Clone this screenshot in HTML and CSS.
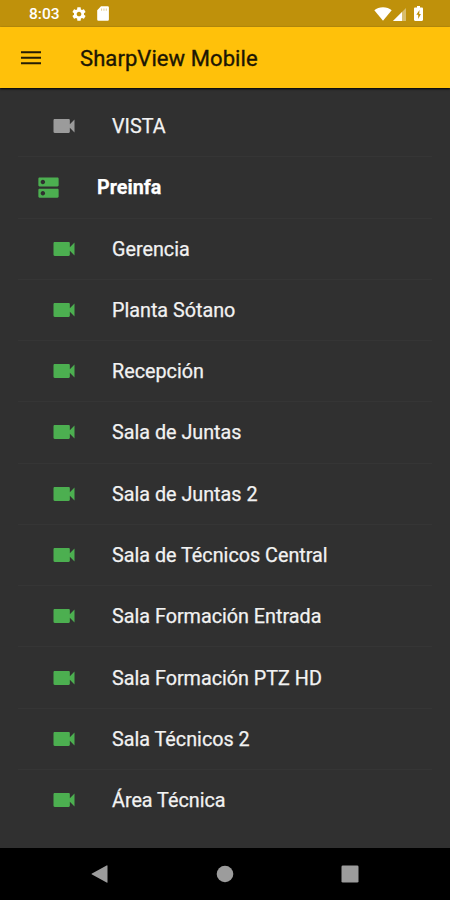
FILE: index.html
```html
<!DOCTYPE html>
<html lang="es">
<head>
<meta charset="utf-8">
<title>SharpView Mobile</title>
<link rel="stylesheet" href="styles.css">
</head>
<body>
<svg class="defs" aria-hidden="true">
  <symbol id="cam" viewBox="0 0 24 24"><path d="M17 10.500V7c0-.55-.45-1-1-1H4c-.55 0-1 .45-1 1v10c0 .55.45 1 1 1h12c.55 0 1-.45 1-1v-3.500l4 4v-11l-4 4z"/></symbol>
</svg>
<div class="screen">
  <header class="status">
    <span class="time">8:03</span>
    <svg class="gear" viewBox="0 0 24 24"><path d="M19.430 12.980c.04-.32.07-.64.07-.98s-.03-.66-.07-.98l2.110-1.650c.19-.15.24-.42.12-.64l-2-3.460c-.12-.22-.39-.3-.61-.22l-2.490 1c-.52-.4-1.080-.73-1.690-.98l-.38-2.650C14.460 2.180 14.250 2 14 2h-4c-.25 0-.46.18-.49.42l-.38 2.650c-.61.25-1.170.59-1.690.98l-2.490-1c-.23-.09-.49 0-.61.22l-2 3.460c-.13.22-.07.49.12.64l2.110 1.650c-.04.32-.07.65-.07.98s.03.66.07.98l-2.110 1.650c-.19.15-.24.42-.12.64l2 3.460c.12.22.39.3.61.22l2.490-1c.52.4 1.080.73 1.690.98l.38 2.650c.03.24.24.42.49.42h4c.25 0 .46-.18.49-.42l.38-2.650c.61-.25 1.170-.59 1.690-.98l2.490 1c.23.09.49 0 .61-.22l2-3.460c.12-.22.07-.49-.12-.64l-2.110-1.650zM12 15.500c-1.930 0-3.500-1.570-3.500-3.500s1.570-3.500 3.500-3.500 3.500 1.570 3.500 3.500-1.570 3.500-3.500 3.500z"/></svg>
    <svg class="sd" viewBox="0 0 12 15"><path d="M4 .3h6.700A1.200 1.200 0 0 1 11.900 1.500v12a1.200 1.200 0 0 1-1.200 1.200H1.400A1.200 1.200 0 0 1 .2 13.500V4.200z"/><path class="notch" d="M4.200 2.400h.9v2.300h-.9zM6.500 2.400h.9v2.300h-.9zM8.800 2.400h.9v2.300h-.9z"/></svg>
    <span class="spacer"></span>
    <svg class="wifi" viewBox="0 0 18 14"><path d="M9 13.800.3 3.200C2.600 1.300 5.600.2 9 .2s6.400 1.100 8.700 3z"/></svg>
    <svg class="signal" viewBox="0 0 13 13"><path class="faint" d="M13 0v13H0z"/><path d="M9 4v9H0z"/></svg>
    <svg class="battery" viewBox="0 0 9 15"><path d="M3 0h3v1.500h1.800c.7 0 1.200.5 1.200 1.200v11.100c0 .7-.5 1.200-1.200 1.200H1.200C.5 15 0 14.500 0 13.800V2.700c0-.7.5-1.200 1.200-1.200H3z"/><path class="bolt" d="M5.500 4 2.300 8.700h1.900V13l2.700-5H5.200z"/></svg>
  </header>
  <div class="appbar">
    <svg class="menu" viewBox="0 0 20 14"><path d="M0 .3h20v1.900H0zM0 5.800h20v1.900H0zM0 11.300h20v1.900H0z"/></svg>
    <h1>SharpView Mobile</h1>
  </div>
  <ul class="list">
    <li class="off"><svg><use href="#cam"/></svg><span>VISTA</span></li>
    <li class="server"><svg viewBox="0 0 24 24"><path d="M20 13H4c-.55 0-1 .45-1 1v6c0 .55.45 1 1 1h16c.55 0 1-.45 1-1v-6c0-.55-.45-1-1-1zM7 19c-1.100 0-2-.9-2-2s.9-2 2-2 2 .9 2 2-.9 2-2 2zM20 3H4c-.55 0-1 .45-1 1v6c0 .55.45 1 1 1h16c.55 0 1-.45 1-1V4c0-.55-.45-1-1-1zM7 9c-1.100 0-2-.9-2-2s.9-2 2-2 2 .9 2 2-.9 2-2 2z"/></svg><span>Preinfa</span></li>
    <li><svg><use href="#cam"/></svg><span>Gerencia</span></li>
    <li><svg><use href="#cam"/></svg><span>Planta Sótano</span></li>
    <li><svg><use href="#cam"/></svg><span>Recepción</span></li>
    <li><svg><use href="#cam"/></svg><span>Sala de Juntas</span></li>
    <li><svg><use href="#cam"/></svg><span>Sala de Juntas 2</span></li>
    <li><svg><use href="#cam"/></svg><span>Sala de Técnicos Central</span></li>
    <li><svg><use href="#cam"/></svg><span>Sala Formación Entrada</span></li>
    <li><svg><use href="#cam"/></svg><span>Sala Formación PTZ HD</span></li>
    <li><svg><use href="#cam"/></svg><span>Sala Técnicos 2</span></li>
    <li><svg><use href="#cam"/></svg><span>Área Técnica</span></li>
  </ul>
  <nav class="navbar">
    <svg viewBox="0 0 18 18"><path d="M16.500.8v16.400a.6.600 0 0 1-.9.400L1 9.600a.7.700 0 0 1 0-1.200L15.600.4a.6.600 0 0 1 .9.400z"/></svg>
    <svg viewBox="0 0 18 18"><circle cx="9" cy="9" r="8.300"/></svg>
    <svg viewBox="0 0 18 18"><rect x=".5" y=".5" width="17" height="17" rx="1.300"/></svg>
  </nav>
</div>
</body>
</html>
```
FILE: styles.css
```css
* { box-sizing: border-box; }
body { margin: 0; font-family: Roboto, sans-serif; background: #303030; }
svg { display: block; flex: none; }
.defs { position: absolute; width: 0; height: 0; }
.screen { width: 450px; height: 900px; display: flex; flex-direction: column; overflow: hidden; }

.status { height: 27px; flex: none; display: flex; align-items: center; padding: 0 27px 0 29px; background: #bf910b; color: #fff; fill: #fff; }
.time { width: 42px; padding-top: 1px; font-size: 15.500px; font-weight: 500; line-height: 26px; }
.gear { width: 16px; height: 16px; }
.sd { width: 12px; height: 15px; margin-left: 10px; }
.spacer { flex: 1; }
.wifi { width: 18px; height: 14px; }
.signal { width: 13px; height: 13px; margin: 2px 8px 0 1px; }
.faint { opacity: .4; }
.battery { width: 9px; height: 15px; }
.bolt, .notch { fill: #bf910b; }
.notch { opacity: .5; }

.appbar { position: relative; height: 61px; flex: none; display: flex; align-items: center; padding-left: 21px; background: #ffc10a; box-shadow: 0 1px 2px #000; }
.menu { width: 20px; height: 14px; margin-right: 39px; fill: #251d05; }
h1 { margin: 0; padding-top: 1px; font-size: 22px; font-weight: 400; color: #1c1604; -webkit-text-stroke: .35px #1c1604; letter-spacing: .08px; white-space: nowrap; }

.list { list-style: none; flex: 1; margin: 0; padding: 8px 18px 0; background: #303030; }
.list li { display: flex; align-items: center; height: 61.270px; padding-left: 32px; border-bottom: 1px solid #353535; color: #f2f2f2; font-size: 19.750px; white-space: nowrap; }
.list li:last-child { border-bottom-color: transparent; }
.list span { padding-top: 1px; -webkit-text-stroke: .25px currentColor; }
.list svg { width: 28px; height: 28px; margin-right: 34px; fill: #4caf50; }
.list .off svg { fill: #9b9b9b; }
.list .server { padding-left: 17px; font-weight: 700; color: #fff; }
.list .server svg { width: 27px; height: 27px; margin-right: 35px; }

.navbar { height: 52px; flex: none; display: flex; justify-content: space-between; align-items: center; padding: 0 91px; background: #000; }
.navbar svg { width: 18px; height: 18px; fill: #9c9c9c; }
```
